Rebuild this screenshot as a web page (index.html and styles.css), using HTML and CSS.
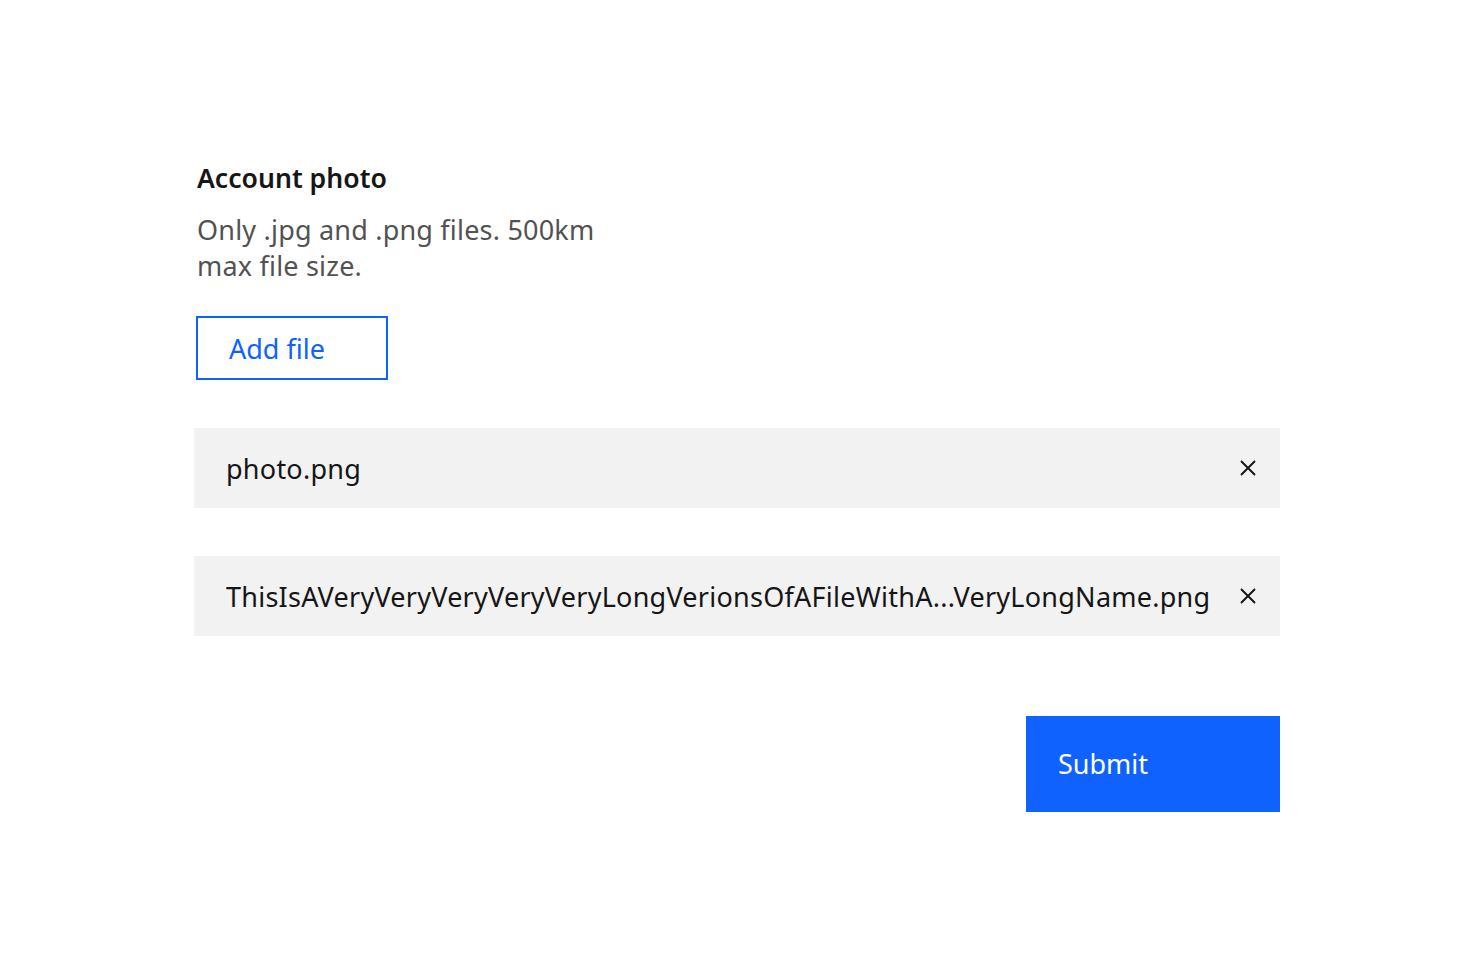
FILE: index.html
```html
<!DOCTYPE html>
<html>
<head>
<meta charset="utf-8">
<link rel="stylesheet" href="styles.css">
</head>
<body>
<main class="page">
  <form class="uploader">
    <div class="label">Account photo</div>
    <p class="helper">Only .jpg and .png files. 500km max file size.</p>
    <button type="button" class="add-btn">Add file</button>
    <div class="files">
      <div class="file-row">
        <span class="file-name">photo.png</span>
        <span class="close">
          <svg width="16" height="16" viewBox="0 0 16 16"><path d="M1 1 L15 15 M15 1 L1 15" stroke="#161616" stroke-width="2" fill="none"/></svg>
        </span>
      </div>
      <div class="file-row">
        <span class="file-name">ThisIsAVeryVeryVeryVeryVeryLongVerionsOfAFileWithA...VeryLongName.png</span>
        <span class="close">
          <svg width="16" height="16" viewBox="0 0 16 16"><path d="M1 1 L15 15 M15 1 L1 15" stroke="#161616" stroke-width="2" fill="none"/></svg>
        </span>
      </div>
    </div>
    <div class="actions">
      <button type="button" class="submit">Submit</button>
    </div>
  </form>
</main>
</body>
</html>
```
FILE: styles.css
```css
* { box-sizing: border-box; }
body {
  margin: 0;
  background: #fff;
  font-family: "Noto Sans", "Open Sans", sans-serif;
  color: #161616;
}
.page {
  padding: 160px 0 0 194px;
}
.uploader {
  width: 1086px;
  display: flex;
  flex-direction: column;
}
.label {
  font-size: 26.6px;
  font-weight: 600;
  line-height: 36px;
  padding-left: 3px;
  color: #161616;
}
.helper {
  margin: 16px 0 0 3px;
  width: 410px;
  font-size: 27px;
  letter-spacing: 0.2px;
  line-height: 36px;
  color: #525252;
}
.add-btn {
  margin: 32px 0 0 2px;
  width: 192px;
  height: 64px;
  border: 2px solid #0f62fe;
  background: #fff;
  color: #0f62fe;
  font-family: inherit;
  font-size: 27px;
  text-align: left;
  padding: 0 0 0 31px;
}
.files {
  margin-top: 48px;
  display: flex;
  flex-direction: column;
  gap: 48px;
}
.file-row {
  height: 80px;
  background: #f2f2f2;
  display: flex;
  align-items: center;
  padding: 0 24px 0 32px;
}
.file-name {
  flex: 1;
  font-size: 27px;
  letter-spacing: 0.25px;
  white-space: nowrap;
  overflow: hidden;
}
.close {
  width: 16px;
  height: 16px;
  margin-left: 16px;
  display: flex;
}
.actions {
  margin-top: 80px;
  display: flex;
  justify-content: flex-end;
}
.submit {
  width: 254px;
  height: 96px;
  border: none;
  background: #0f62fe;
  color: #fff;
  font-family: inherit;
  font-size: 27px;
  text-align: left;
  padding: 0 0 2px 32px;
}
```
